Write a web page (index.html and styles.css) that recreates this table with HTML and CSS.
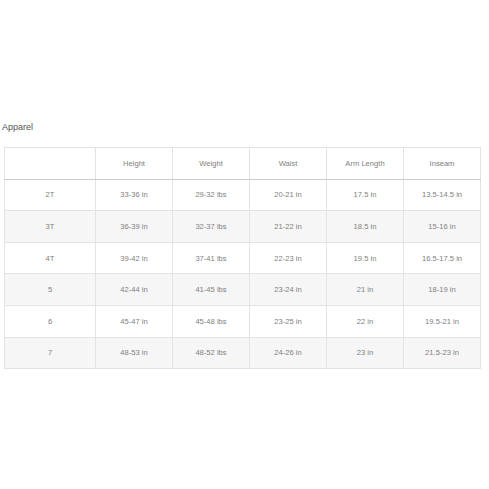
FILE: index.html
```html
<!DOCTYPE html>
<html>
<head>
<meta charset="utf-8">
<link rel="stylesheet" href="styles.css">
</head>
<body>
<div class="page">
  <h2 class="title">Apparel</h2>
  <table class="sizes">
    <thead>
      <tr><th></th><th>Height</th><th>Weight</th><th>Waist</th><th>Arm Length</th><th>Inseam</th></tr>
    </thead>
    <tbody>
      <tr><td>2T</td><td>33-36 in</td><td>29-32 lbs</td><td>20-21 in</td><td>17.5 in</td><td>13.5-14.5 in</td></tr>
      <tr><td>3T</td><td>36-39 in</td><td>32-37 lbs</td><td>21-22 in</td><td>18.5 in</td><td>15-16 in</td></tr>
      <tr><td>4T</td><td>39-42 in</td><td>37-41 lbs</td><td>22-23 in</td><td>19.5 in</td><td>16.5-17.5 in</td></tr>
      <tr><td>5</td><td>42-44 in</td><td>41-45 lbs</td><td>23-24 in</td><td>21 in</td><td>18-19 in</td></tr>
      <tr><td>6</td><td>45-47 in</td><td>45-48 lbs</td><td>23-25 in</td><td>22 in</td><td>19.5-21 in</td></tr>
      <tr><td>7</td><td>48-53 in</td><td>48-52 lbs</td><td>24-26 in</td><td>23 in</td><td>21.5-23 in</td></tr>
    </tbody>
  </table>
</div>
</body>
</html>
```

FILE: styles.css
```css
html, body {
  margin: 0;
  padding: 0;
  background: #fff;
}
body {
  font-family: "Liberation Sans", Arial, sans-serif;
}
.page {
  padding: 121px 8px 0 4px;
}
.title {
  margin: 0 0 14px -2px;
  font-size: 9px;
  font-weight: normal;
  color: #555;
  line-height: 12px;
}
.sizes {
  width: 477px;
  border-collapse: collapse;
  table-layout: fixed;
  font-size: 7.6px;
  color: #808080;
}
.sizes th, .sizes td {
  border: 1px solid #e3e3e3;
  text-align: center;
  height: 30.6px;
  padding: 0;
  font-weight: normal;
}
.sizes th:first-child, .sizes td:first-child {
  width: 90px;
}
.sizes thead th {
  border-bottom: 1px solid #ccc;
}
.sizes tbody tr:nth-child(even) td {
  background: #f6f6f6;
}
```
